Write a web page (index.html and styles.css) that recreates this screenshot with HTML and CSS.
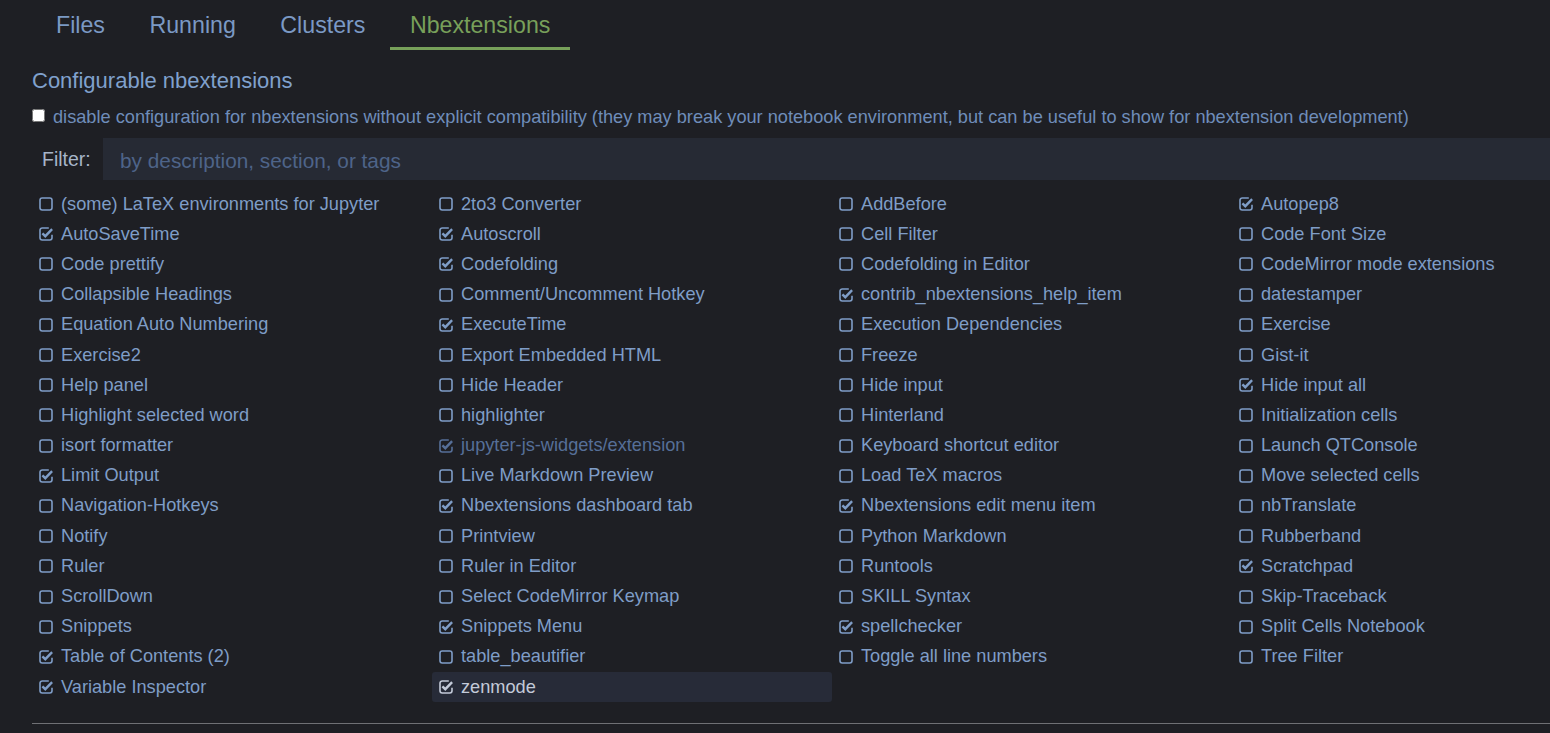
FILE: index.html
```html
<!DOCTYPE html>
<html>
<head>
<meta charset="utf-8">
<link rel="stylesheet" href="styles.css">
</head>
<body>
<svg class="defs" width="0" height="0">
  <symbol id="un" viewBox="0 0 14 14">
    <rect x="1" y="1" width="12" height="12" rx="2.2" fill="none" stroke="currentColor" stroke-width="1.6"/>
  </symbol>
  <symbol id="ck" viewBox="0 0 14 14">
    <path d="M9.8 1H3.2A2.2 2.2 0 0 0 1 3.2v7.6A2.2 2.2 0 0 0 3.2 13h7.6a2.2 2.2 0 0 0 2.2-2.2V7.8" fill="none" stroke="currentColor" stroke-width="1.6"/>
    <path d="M3.4 6.3l2.9 2.9 6.8-7" fill="none" stroke="currentColor" stroke-width="2.4"/>
  </symbol>
</svg>
<nav class="tabs">
  <span class="tab">Files</span>
  <span class="tab">Running</span>
  <span class="tab">Clusters</span>
  <span class="tab active">Nbextensions</span>
</nav>
<main class="content">
  <h2 class="title">Configurable nbextensions</h2>
  <label class="compat"><input type="checkbox" class="native"> disable configuration for nbextensions without explicit compatibility (they may break your notebook environment, but can be useful to show for nbextension development)</label>
  <div class="filter">
    <span class="filter-label">Filter:</span>
    <input class="filter-input" type="text" placeholder="by description, section, or tags">
  </div>
  <ul class="ext-list" id="list"></ul>
  <hr class="rule">
</main>
<script src="app.js"></script>
</body>
</html>
```
FILE: app.js
```js
var items = [
["(some) LaTeX environments for Jupyter",0],["2to3 Converter",0],["AddBefore",0],["Autopep8",1],
["AutoSaveTime",1],["Autoscroll",1],["Cell Filter",0],["Code Font Size",0],
["Code prettify",0],["Codefolding",1],["Codefolding in Editor",0],["CodeMirror mode extensions",0],
["Collapsible Headings",0],["Comment/Uncomment Hotkey",0],["contrib_nbextensions_help_item",1],["datestamper",0],
["Equation Auto Numbering",0],["ExecuteTime",1],["Execution Dependencies",0],["Exercise",0],
["Exercise2",0],["Export Embedded HTML",0],["Freeze",0],["Gist-it",0],
["Help panel",0],["Hide Header",0],["Hide input",0],["Hide input all",1],
["Highlight selected word",0],["highlighter",0],["Hinterland",0],["Initialization cells",0],
["isort formatter",0],["jupyter-js-widgets/extension",2],["Keyboard shortcut editor",0],["Launch QTConsole",0],
["Limit Output",1],["Live Markdown Preview",0],["Load TeX macros",0],["Move selected cells",0],
["Navigation-Hotkeys",0],["Nbextensions dashboard tab",1],["Nbextensions edit menu item",1],["nbTranslate",0],
["Notify",0],["Printview",0],["Python Markdown",0],["Rubberband",0],
["Ruler",0],["Ruler in Editor",0],["Runtools",0],["Scratchpad",1],
["ScrollDown",0],["Select CodeMirror Keymap",0],["SKILL Syntax",0],["Skip-Traceback",0],
["Snippets",0],["Snippets Menu",1],["spellchecker",1],["Split Cells Notebook",0],
["Table of Contents (2)",1],["table_beautifier",0],["Toggle all line numbers",0],["Tree Filter",0],
["Variable Inspector",1],["zenmode",3]
];
var list = document.getElementById('list');
items.forEach(function (it) {
  var li = document.createElement('li');
  li.className = 'ext' + (it[1] === 2 ? ' disabled' : '') + (it[1] === 3 ? ' selected' : '');
  var icon = it[1] ? 'ck' : 'un';
  li.innerHTML = '<svg class="box"><use href="#' + icon + '"/></svg><span class="name"></span>';
  li.querySelector('.name').textContent = it[0];
  list.appendChild(li);
});
```
FILE: styles.css
```css
html { overflow: hidden; }
body {
  margin: 0;
  background: #1e1f24;
  font-family: "Liberation Sans", Arial, sans-serif;
  color: #7f9dc7;
}
.defs { position: absolute; }
.tabs {
  display: flex;
  gap: 4.5px;
  padding-left: 36px;
  height: 50px;
}
.tab {
  box-sizing: border-box;
  height: 50px;
  padding: 0 20px;
  font-size: 23.2px;
  line-height: 50px;
  color: #7b99c4;
  border-bottom: 3px solid transparent;
}
.tab.active {
  color: #78a05a;
  border-bottom-color: #77a05a;
}
.content {
  padding-left: 32px;
}
.title {
  margin: 17px 0 0;
  font-size: 22px;
  font-weight: normal;
  line-height: 28px;
  color: #80a1cd;
}
.compat {
  display: flex;
  align-items: center;
  gap: 8px;
  margin-top: 10px;
  font-size: 18.2px;
  line-height: 24px;
  color: #6f8dba;
  white-space: nowrap;
}
.native {
  margin: 0;
  width: 13px;
  height: 13px;
  position: relative;
  top: -2px;
}
.filter {
  display: flex;
  align-items: center;
  margin-top: 9px;
  height: 42px;
}
.filter-label {
  flex: none;
  width: 71px;
  box-sizing: border-box;
  padding-left: 10px;
  font-size: 19.5px;
  color: #a7b5c9;
}
.filter-input {
  flex: 0 0 1500px;
  height: 42px;
  box-sizing: border-box;
  border: 0;
  outline: 0;
  background: #262a34;
  padding: 4px 17px 0;
  font-family: inherit;
  font-size: 20.8px;
  color: #a7b5c9;
}
.filter-input::placeholder { color: #4e6489; }
.ext-list {
  list-style: none;
  margin: 9px 0 0;
  padding: 0;
  display: grid;
  grid-template-columns: repeat(4, 400px);
}
.ext {
  display: flex;
  align-items: center;
  gap: 8px;
  height: 30.2px;
  padding-left: 7px;
  font-size: 18.2px;
  color: #7f9dc7;
  white-space: nowrap;
  border-radius: 3px;
}
.box {
  width: 14px;
  height: 14px;
  flex: none;
}
.ext.disabled { color: #566f98; }
.ext.selected {
  background: #272b38;
  color: #c3cad8;
}
.rule {
  margin: 21px 0 0;
  border: 0;
  border-top: 1px solid #6f7075;
  width: 1600px;
}
```
